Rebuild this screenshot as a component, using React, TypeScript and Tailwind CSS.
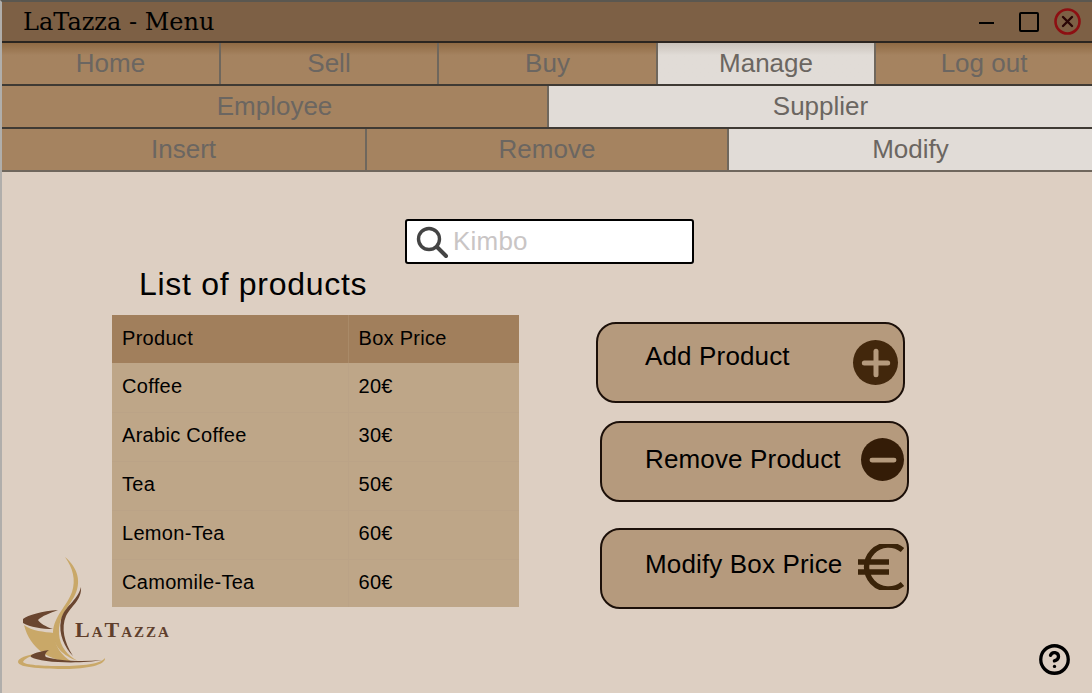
import { Minus, CircleHelp, Plus } from 'lucide-react'

const mainTabs = [
  { label: 'Home', width: 'w-[217px]' },
  { label: 'Sell', width: 'w-[218px]' },
  { label: 'Buy', width: 'w-[219px]' },
  { label: 'Manage', width: 'w-[218px]', active: true },
  { label: 'Log out', width: 'flex-1' },
]

const subTabs = [
  { label: 'Employee', width: 'w-[545px]' },
  { label: 'Supplier', width: 'flex-1', active: true },
]

const actionTabs = [
  { label: 'Insert', width: 'w-[363px]' },
  { label: 'Remove', width: 'w-[362px]' },
  { label: 'Modify', width: 'flex-1', active: true },
]

const products = [
  { name: 'Coffee', price: '20€' },
  { name: 'Arabic Coffee', price: '30€' },
  { name: 'Tea', price: '50€' },
  { name: 'Lemon-Tea', price: '60€' },
  { name: 'Camomile-Tea', price: '60€' },
]

type Tab = { label: string; width: string; active?: boolean }

function TabRow({ tabs, shaded, last }: { tabs: Tab[]; shaded?: boolean; last?: boolean }) {
  return (
    <div className={`flex h-[43px] border-b-2 ${last ? 'border-[#6f675d]' : 'border-[#3f3a34]'}`}>
      {tabs.map((tab, i) => (
        <div
          key={tab.label}
          className={`${tab.width} flex items-center justify-center pb-px text-[26px] text-[#6b6661] ${i > 0 ? 'border-l-2 border-[#6f675d]' : ''} ${
            tab.active
              ? shaded
                ? 'bg-gradient-to-b from-[#c9c2ba] to-[#e1dcd7] to-30%'
                : 'bg-[#e1dcd7]'
              : shaded
                ? 'bg-gradient-to-b from-[#8f6a44] to-[#a58360] to-30%'
                : 'bg-[#a58360]'
          }`}
        >
          {tab.label}
        </div>
      ))}
    </div>
  )
}

function ActionButton({ label, icon, className }: { label: string; icon: React.ReactNode; className: string }) {
  return (
    <button className={`${className} relative block h-[81px] w-[309px] rounded-[20px] border-2 border-[#1c1009] bg-[#b59a7d] text-left text-[26px] tracking-[0.15px] text-black`}>
      {label}
      {icon}
    </button>
  )
}

function Logo() {
  return (
    <div className="absolute bottom-[22px] left-[14px] h-[115px] w-[160px]">
      <svg width="94" height="115" viewBox="0 0 94 115" className="absolute left-0 top-0">
        <path d="M49 1 C62 12 66 26 58 41 C50 54 42 62 43 78 C44 91 52 100 62 105 C47 100 37 90 37 76 C38 60 51 50 56 36 C60 24 57 12 49 1Z" fill="#c9a868" />
        <path d="M65 31 C66 44 55 50 50 60 C45 72 48 86 57 100 C49 92 42 78 45 64 C48 50 61 46 65 31Z" fill="#6a4630" />
        <path d="M42 54 C26 55 12 59 7 63 L7 67 C14 71 26 73 37 73 C30 71 24 67 22 64 C26 60 34 57 42 54Z" fill="#6a4630" />
        <path d="M8 69 C16 75 28 76 38 77 C38 90 46 100 56 106 C34 105 14 93 8 69Z" fill="#c9a868" />
        <path d="M24 97 C10 99 2 102 2 106 C2 112 30 113 50 113 C70 113 90 109 89 102 C85 108 66 110 46 110 C26 110 9 109 7 106 C8 103 14 100 24 97Z" fill="#c9a868" />
        <path d="M33 94 C20 96 13 99 15 101 C24 107 66 108 86 104 C66 106 44 105 30 101 C28 99 30 96 33 94Z" fill="#6a4630" />
      </svg>
      <span className="absolute left-[59px] top-[63px] font-['Liberation_Serif',serif] text-[22px] font-bold leading-none tracking-[2px] text-[#5f3f2c] [font-variant:small-caps]">
        LaTazza
      </span>
    </div>
  )
}

export default function App() {
  return (
    <div className="relative h-[693px] w-[1092px] overflow-hidden border-l-2 border-t-2 border-l-[#b0aeab] border-t-[#5a5750] bg-[#ddcfc2] font-['Liberation_Sans',sans-serif]">
      <div className="-ml-[2px] border-l-2 border-[#57534c]">
        <div className="flex h-[41px] items-center justify-between border-b-2 border-[#2b2520] bg-[#7d6045] pl-[21px] pr-[11px]">
          <span className="font-['DejaVu_Serif',serif] text-[24px] text-black">LaTazza - Menu</span>
          <div className="flex items-center">
            <span className="mr-[25px] mt-[3px] h-[2px] w-[15px] bg-black" />
            <span className="mr-[15px] h-[20px] w-[20px] rounded-[2px] border-2 border-black" />
            <svg width="27" height="27" viewBox="0 0 27 27">
              <circle cx="13.5" cy="13.5" r="12" fill="none" stroke="#8d0f12" strokeWidth="2.6" />
              <path d="M9 9 L18 18 M18 9 L9 18" stroke="#2a0606" strokeWidth="2.4" strokeLinecap="round" />
            </svg>
          </div>
        </div>
        <TabRow tabs={mainTabs} shaded />
        <TabRow tabs={subTabs} />
        <TabRow tabs={actionTabs} last />
      </div>

      <div className="ml-[403px] mt-[47px] flex h-[45px] w-[289px] items-center rounded-[3px] border-2 border-black bg-white pl-[9px] text-[26px] tracking-[0.2px] text-[#c9c5c5]">
        <svg width="34" height="34" viewBox="0 0 34 34" className="mr-[3px] shrink-0">
          <circle cx="13" cy="14" r="10.5" fill="none" stroke="#444" strokeWidth="3.4" />
          <path d="M21 22 L30 31" stroke="#444" strokeWidth="4" strokeLinecap="round" />
        </svg>
        Kimbo
      </div>

      <div className="flex">
        <div className="ml-[110px] w-[407px]">
          <h1 className="ml-[27px] mt-[2px] h-[49px] text-[32px] leading-[37px] tracking-[0.7px] text-black">List of products</h1>
          <table className="w-full table-fixed border-collapse text-[20px] tracking-[0.3px] text-black">
            <thead>
              <tr className="h-[48px] bg-[#a17f5c]">
                <th className="w-[236px] border-r border-[#a98a68] pb-[3px] pl-[10px] text-left font-normal">Product</th>
                <th className="pb-[3px] pl-[10px] text-left font-normal">Box Price</th>
              </tr>
            </thead>
            <tbody>
              {products.map((p) => (
                <tr key={p.name} className="h-[49px] border-b border-[#bba387] bg-[#bea688] last:h-[48px] last:border-b-0">
                  <td className="border-r border-[#bba387] pb-[3px] pl-[10px]">{p.name}</td>
                  <td className="pb-[3px] pl-[10px]">{p.price}</td>
                </tr>
              ))}
            </tbody>
          </table>
        </div>
        <div className="ml-[78px] pt-[58px]">
          <ActionButton
            label="Add Product"
            className="-ml-[1px] pb-[12px] pl-[47px]"
            icon={
              <span className="absolute right-[5px] top-[16px] flex h-[45px] w-[45px] items-center justify-center rounded-full bg-[#42270c] text-[#b59a7d]">
                <Plus size={40} strokeWidth={3} />
              </span>
            }
          />
          <ActionButton
            label="Remove Product"
            className="ml-[3px] mt-[18px] pb-[4px] pl-[43px]"
            icon={
              <span className="absolute right-[3px] top-[15px] flex h-[43px] w-[43px] items-center justify-center rounded-full bg-[#341c07] text-[#b59a7d]">
                <Minus size={38} strokeWidth={3} />
              </span>
            }
          />
          <ActionButton
            label="Modify Box Price"
            className="ml-[3px] mt-[26px] pb-[9px] pl-[43px]"
            icon={
              <svg width="50" height="46" viewBox="0 0 50 46" className="absolute right-[0px] top-[14px]">
                <path d="M45.5 6 A22 22 0 1 0 45.5 40 M1 18 H32 M1 28 H32" fill="none" stroke="#3a2309" strokeWidth="5.4" />
              </svg>
            }
          />
        </div>
      </div>

      <Logo />
      <CircleHelp size={33} strokeWidth={2.4} className="absolute bottom-[17px] right-[21px] text-black" />
    </div>
  )
}
